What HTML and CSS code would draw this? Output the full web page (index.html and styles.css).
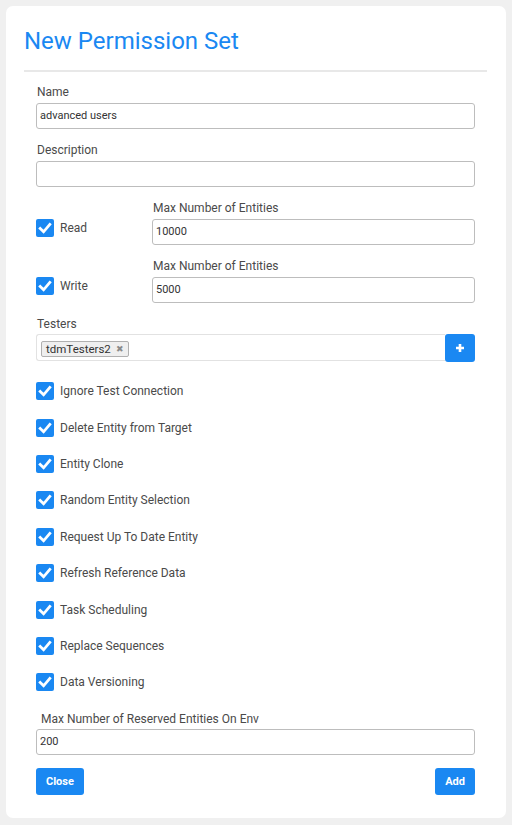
FILE: index.html
```html
<!DOCTYPE html>
<html>
<head>
<meta charset="utf-8">
<link rel="stylesheet" href="styles.css">
</head>
<body>
<div class="card">
  <h1 class="title">New Permission Set</h1>
  <div class="divider"></div>
  <form class="form">
    <div class="field">
      <label class="label">Name</label>
      <div class="input">advanced users</div>
    </div>
    <div class="field gap14">
      <label class="label">Description</label>
      <div class="input"></div>
    </div>
    <div class="limit-row gap14">
      <div class="check"><span class="box"><svg viewBox="0 0 18 18" width="18" height="18"><path d="M4.2 9.4 L7.6 12.8 L13.8 5.4" fill="none" stroke="#fff" stroke-width="2.8" stroke-linecap="square"/></svg></span><span class="check-text">Read</span></div>
      <div class="field">
        <label class="label">Max Number of Entities</label>
        <div class="input">10000</div>
      </div>
    </div>
    <div class="limit-row gap14">
      <div class="check"><span class="box"><svg viewBox="0 0 18 18" width="18" height="18"><path d="M4.2 9.4 L7.6 12.8 L13.8 5.4" fill="none" stroke="#fff" stroke-width="2.8" stroke-linecap="square"/></svg></span><span class="check-text">Write</span></div>
      <div class="field">
        <label class="label">Max Number of Entities</label>
        <div class="input">5000</div>
      </div>
    </div>
    <div class="field gap14">
      <label class="label label-tight">Testers</label>
      <div class="tags-row">
        <div class="tags">
          <span class="tag">tdmTesters2 <span class="tag-x">&#x2716;</span></span>
        </div>
        <button type="button" class="plus"><svg viewBox="0 0 10 10" width="10" height="10"><path d="M5 1 V9 M1 5 H9" stroke="#fff" stroke-width="2.6"/></svg></button>
      </div>
    </div>
    <div class="checks">
      <div class="check"><span class="box"><svg viewBox="0 0 18 18" width="18" height="18"><path d="M4.2 9.4 L7.6 12.8 L13.8 5.4" fill="none" stroke="#fff" stroke-width="2.8" stroke-linecap="square"/></svg></span><span class="check-text">Ignore Test Connection</span></div>
      <div class="check"><span class="box"><svg viewBox="0 0 18 18" width="18" height="18"><path d="M4.2 9.4 L7.6 12.8 L13.8 5.4" fill="none" stroke="#fff" stroke-width="2.8" stroke-linecap="square"/></svg></span><span class="check-text">Delete Entity from Target</span></div>
      <div class="check"><span class="box"><svg viewBox="0 0 18 18" width="18" height="18"><path d="M4.2 9.4 L7.6 12.8 L13.8 5.4" fill="none" stroke="#fff" stroke-width="2.8" stroke-linecap="square"/></svg></span><span class="check-text">Entity Clone</span></div>
      <div class="check"><span class="box"><svg viewBox="0 0 18 18" width="18" height="18"><path d="M4.2 9.4 L7.6 12.8 L13.8 5.4" fill="none" stroke="#fff" stroke-width="2.8" stroke-linecap="square"/></svg></span><span class="check-text">Random Entity Selection</span></div>
      <div class="check"><span class="box"><svg viewBox="0 0 18 18" width="18" height="18"><path d="M4.2 9.4 L7.6 12.8 L13.8 5.4" fill="none" stroke="#fff" stroke-width="2.8" stroke-linecap="square"/></svg></span><span class="check-text">Request Up To Date Entity</span></div>
      <div class="check"><span class="box"><svg viewBox="0 0 18 18" width="18" height="18"><path d="M4.2 9.4 L7.6 12.8 L13.8 5.4" fill="none" stroke="#fff" stroke-width="2.8" stroke-linecap="square"/></svg></span><span class="check-text">Refresh Reference Data</span></div>
      <div class="check"><span class="box"><svg viewBox="0 0 18 18" width="18" height="18"><path d="M4.2 9.4 L7.6 12.8 L13.8 5.4" fill="none" stroke="#fff" stroke-width="2.8" stroke-linecap="square"/></svg></span><span class="check-text">Task Scheduling</span></div>
      <div class="check"><span class="box"><svg viewBox="0 0 18 18" width="18" height="18"><path d="M4.2 9.4 L7.6 12.8 L13.8 5.4" fill="none" stroke="#fff" stroke-width="2.8" stroke-linecap="square"/></svg></span><span class="check-text">Replace Sequences</span></div>
      <div class="check"><span class="box"><svg viewBox="0 0 18 18" width="18" height="18"><path d="M4.2 9.4 L7.6 12.8 L13.8 5.4" fill="none" stroke="#fff" stroke-width="2.8" stroke-linecap="square"/></svg></span><span class="check-text">Data Versioning</span></div>
    </div>
    <div class="field reserved">
      <label class="label label-tight label-indent">Max Number of Reserved Entities On Env</label>
      <div class="input">200</div>
    </div>
    <div class="actions">
      <button type="button" class="btn">Close</button>
      <button type="button" class="btn">Add</button>
    </div>
  </form>
</div>
</body>
</html>
```

FILE: styles.css
```css
* { box-sizing: border-box; }
html, body { margin: 0; padding: 0; }
body {
  background: #f0f0f0;
  font-family: Roboto, "Liberation Sans", sans-serif;
  width: 512px;
  height: 825px;
  padding: 6px;
}
.card {
  background: #fff;
  border-radius: 7px;
  width: 500px;
  height: 812px;
  padding: 21px 19px 0 18px;
}
.title {
  margin: 0;
  font-size: 24px;
  line-height: 28px;
  font-weight: 400;
  color: #1a88f2;
}
.divider {
  margin-top: 15px;
  height: 2px;
  background: #e8e8e8;
}
.form {
  display: flex;
  flex-direction: column;
  padding: 13px 12px 0;
}
.field { display: flex; flex-direction: column; }
.gap14 { margin-top: 14px; }
.label {
  font-size: 12px;
  line-height: 14px;
  color: #4a4a4a;
  padding-left: 1px;
  margin-bottom: 4px;
}
.label-tight { margin-bottom: 3px; }
.label-indent { padding-left: 5px; }
.input {
  height: 26px;
  border: 1px solid #bdbdbd;
  border-radius: 3px;
  padding-left: 3px;
  font-size: 11px;
  line-height: 24px;
  color: #333;
}
.limit-row {
  display: grid;
  grid-template-columns: 116px 1fr;
  align-items: end;
}
.limit-row .check { margin-bottom: 8.5px; }
.check {
  display: flex;
  align-items: center;
  height: 18px;
}
.box {
  width: 18px;
  height: 18px;
  background: #1a88f2;
  border-radius: 2px;
  display: block;
}
.box svg { display: block; }
.check-text {
  margin-left: 6px;
  font-size: 12px;
  color: #4a4a4a;
}
.tags-row {
  display: flex;
  height: 28px;
}
.tags {
  flex: 1;
  border: 1px solid #e2e2e2;
  border-right: none;
  border-radius: 3px 0 0 3px;
  padding: 3px 4px;
  height: 27px;
}
.tag {
  display: inline-flex;
  align-items: center;
  height: 16px;
  padding: 0 4px;
  background: #efefef;
  border: 1px solid #b0b0b0;
  border-radius: 2px;
  font-size: 11.5px;
  color: #333;
}
.tag-x {
  font-size: 9px;
  color: #8a8a8a;
  margin-left: 5px;
}
.plus {
  width: 30px;
  height: 28px;
  border: none;
  background: #1a88f2;
  border-radius: 3px;
  padding: 0;
  display: flex;
  align-items: center;
  justify-content: center;
}
.checks {
  display: flex;
  flex-direction: column;
  gap: 18.4px;
  margin-top: 20.2px;
}
.reserved { margin-top: 21px; }
.actions {
  display: flex;
  justify-content: space-between;
  margin-top: 12.7px;
}
.btn {
  height: 27px;
  border: none;
  border-radius: 3px;
  background: #1a88f2;
  color: #fff;
  font-family: Roboto, "Liberation Sans", sans-serif;
  font-weight: 700;
  font-size: 11px;
  padding: 0 10px;
}
```
